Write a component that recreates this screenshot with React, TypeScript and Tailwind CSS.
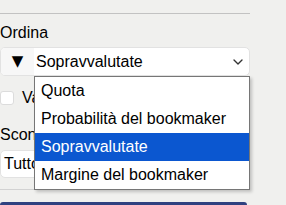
import { ChevronDown } from "lucide-react";

const options = ["Quota", "Probabilità del bookmaker", "Sopravvalutate", "Margine del bookmaker"];

export default function App() {
  const selected = "Sopravvalutate";

  return (
    <div className="h-[205px] w-[286px] overflow-hidden bg-[#f0f0ee] font-['Liberation_Sans',Arial,sans-serif] text-[16px] text-black">
      <div className="relative w-[250px] pt-[13px]">
        <div className="h-px bg-[#c2c2c2]" />

        {/* Sort */}
        <div className="mt-[10px] leading-[18px]">Ordina</div>
        <div className="mt-[5px] flex h-[29px] items-stretch overflow-hidden rounded-[5px] border border-[#e2e2e2] bg-white">
          <div className="flex w-[33px] items-center justify-center bg-[#f7f7f7] font-['DejaVu_Sans',sans-serif] text-[15px]">▼</div>
          <div className="flex flex-1 items-center justify-between pl-[2px] pr-[3px]">
            <span>{selected}</span>
            <ChevronDown size={16} strokeWidth={2} className="text-[#333]" />
          </div>
        </div>

        {/* Checkbox row */}
        <div className="mt-[12px] flex items-center gap-2 leading-[20px]">
          <div className="h-[14px] w-[14px] rounded-[3px] border border-[#dcdcdc] bg-white" />
          <span>Valori</span>
        </div>

        {/* Discount */}
        <div className="mt-[18px] leading-[18px]">Sconto</div>
        <div className="mt-[6px] flex h-[28px] items-center rounded-[5px] border border-[#e2e2e2] bg-white pl-[3px]">
          Tutto
        </div>

        <div className="mt-[11px] h-px bg-[#d2d2d2]" />
        <div className="mt-[12px] h-[4px] w-[247px] rounded-t-[3px] bg-[#2f4180]" />

        {/* Open dropdown list */}
        <ul className="absolute left-[34px] top-[76px] w-[216px] border border-[#767676] bg-white shadow-[2px_2px_3px_rgba(0,0,0,0.2)]">
          {options.map((o) => (
            <li
              key={o}
              className={`flex h-[28px] items-center pl-[6px] ${o === selected ? "bg-[#0b57d0] text-white" : ""}`}
            >
              {o}
            </li>
          ))}
        </ul>
      </div>
    </div>
  );
}
